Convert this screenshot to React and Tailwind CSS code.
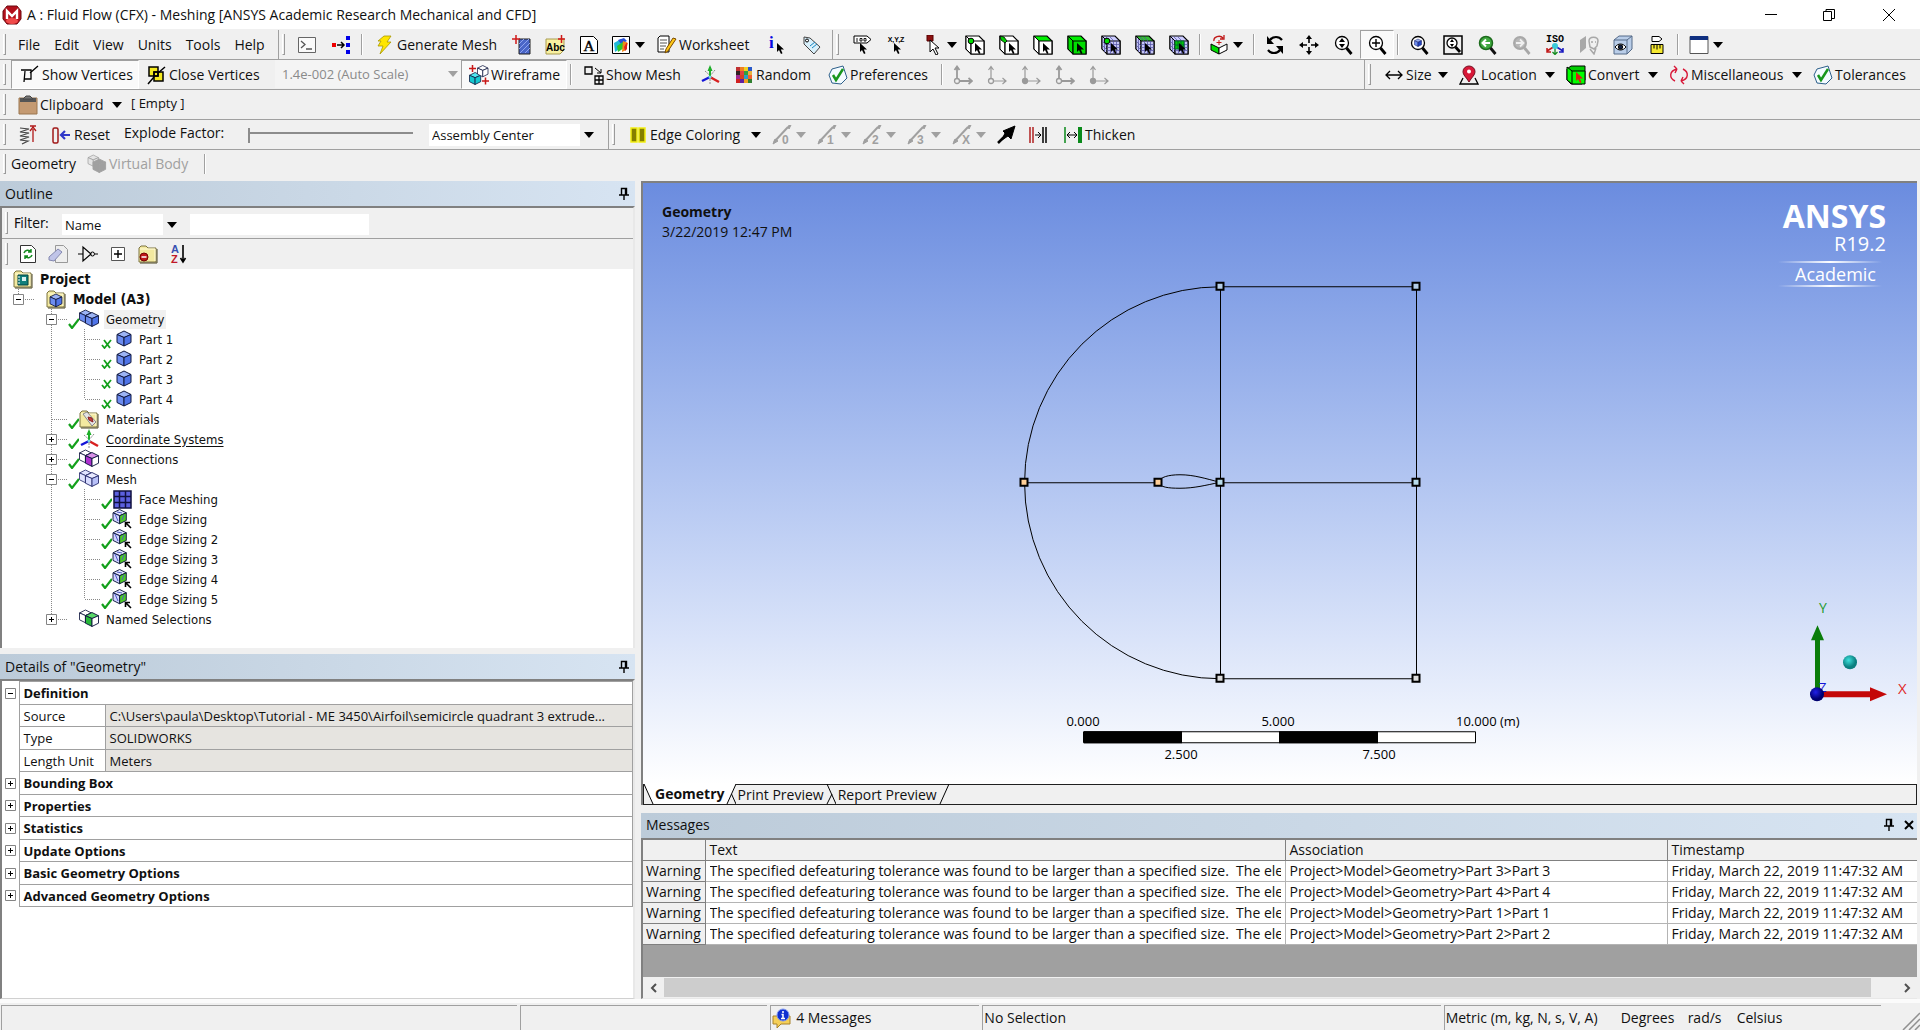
import clsx from "clsx";

/* ---------- icon primitives ---------- */

function Ico({ children, className }) {
  return (
    <svg viewBox="0 0 20 20" fill="none" stroke="#000" aria-hidden="true" className={clsx("h-5 w-5 shrink-0", className)}>
      {children}
    </svg>
  );
}

function Down({ gray }) {
  return (
    <svg viewBox="0 0 10 6" aria-hidden="true" className="h-[6px] w-[10px] shrink-0">
      <path d="M0 0h10L5 6z" fill={gray ? "#a0a0a0" : "#000"} />
    </svg>
  );
}

function Cursor({ x, y, fill = "#000" }) {
  return <path transform={`translate(${x} ${y})`} d="M0 0v9l2-2 2 4 1.500-.8-1.700-3.700H7z" fill={fill} stroke="none" />;
}

function SelectBox({ front = "#fff", top = "#fff", dot, corner, grid, patch }) {
  return (
    <Ico>
      <path d="M1 1h13l5 5v13H6l-5-5z" fill={top} strokeWidth="1.200" />
      <path d="M1 1l5 5v13l-5-5z" fill={grid ? "#c4c4f6" : front} />
      <path d="M6 6h13v13H6z" fill={grid ? "#c4c4f6" : front} strokeWidth="1.200" />
      {grid && <path d="M9.500 6v13M12.500 6v13M15.500 6v13M6 9.500h13M6 12.500h13M6 15.500h13M5 2l4 4M9 2l4 4M3.500 4v13M1 6l5 5M1 10l5 5" stroke="#5050a0" strokeWidth=".7" />}
      {patch && <path d="M6 6h9v8H6z" fill="#0c0" stroke="#063" />}
      {patch && <path d="M9 6v8M12 6v8M6 10h9" stroke="#063" />}
      {corner && <path d="M1 1l4 1 3 4-2 2-4-3z" fill="#0c0" strokeWidth=".8" />}
      {dot && <circle cx="6" cy="6" r="2.800" fill="#0d0" />}
      <Cursor x={10} y={8} />
    </Ico>
  );
}

function Lens({ children, color = "#000", fill = "#fff", box }) {
  return (
    <Ico>
      {box && <path d="M1 1h18v18H1z" strokeWidth="1.500" />}
      <circle cx="9" cy="8" r={box ? 5 : 6.500} fill={fill} stroke={color} strokeWidth="1.300" />
      <path d={box ? "M12.500 12l4.500 5" : "M13.500 13l5 6"} stroke={color} strokeWidth="2.800" />
      {children}
    </Ico>
  );
}

function Hex({ x = 0, y = 0, s = 1, fill = "#4f74e8", top = "#9db4f5", side = "#6d8df0", stroke = "#101840" }) {
  return (
    <g transform={`translate(${x} ${y}) scale(${s})`} stroke={stroke} strokeLinejoin="round">
      <path d="M0 3.500L7 0l7 3.500-7 3z" fill={top} />
      <path d="M0 3.500l7 3V15l-7-3.500z" fill={side} />
      <path d="M14 3.500l-7 3V15l7-3.500z" fill={fill} />
    </g>
  );
}

function Folder({ children }) {
  return (
    <Ico>
      <path d="M1 4l2-2h5l2 2h8v14H1z" fill="#f3e9a0" stroke="#7d7440" />
      <path d="M2 5h15v12" stroke="#fffbd8" />
      <path d="M19 5v14H2" stroke="#4a4420" />
      {children}
    </Ico>
  );
}

function TickCard() {
  return (
    <Ico>
      <path d="M4 4l11-3 4 12-6 6-9-1-3-8z" fill="#f4fbff" stroke="#2d5f8a" />
      <path d="M5 10l3 5 7-11" stroke="#18961c" strokeWidth="2.500" />
    </Ico>
  );
}

function Triad() {
  return (
    <Ico>
      <path d="M5 6l10 9M15 5l-5 6M10 11v8" stroke="#8a8a8a" strokeDasharray="2 1" />
      <path d="M10 12V2" stroke="#1fae2a" strokeWidth="2" />
      <path d="M7.500 6L10 0l2.500 6z" fill="#1fae2a" stroke="none" />
      <path d="M10 12l-8 4" stroke="#1414d8" strokeWidth="2.500" />
      <path d="M10 12l9 5" stroke="#d82020" strokeWidth="2.500" />
      <circle cx="10" cy="12" r="1.500" fill="#6fd6e8" stroke="none" />
    </Ico>
  );
}

function GrayAxes({ filled, bold }) {
  return (
    <Ico>
      <path d="M4 13V2M1.500 5L4 1.500 6.500 5M7 16h12M15.500 13l3.500 3-3.500 3" stroke="#9a9a9a" strokeWidth={bold ? 1.800 : 1.200} />
      <circle cx="4" cy="16" r="2.500" stroke="#9a9a9a" strokeWidth="1.300" fill={filled ? "#9a9a9a" : "#f0f0f0"} />
    </Ico>
  );
}

function EdgeCount({ n }) {
  return (
    <Ico>
      <path d="M2 17L16 2" stroke="#a0a0a0" strokeWidth="2" />
      <path d="M16 1l3-1-2 4zM1 19l2-5 3 2z" fill="#a0a0a0" stroke="#a0a0a0" />
      <text x="10" y="19" fontSize="12" fontWeight="bold" fill="#a0a0a0" stroke="none" fontFamily="Liberation Sans">{n}</text>
    </Ico>
  );
}

function Pin() {
  return (
    <svg viewBox="0 0 10 14" fill="none" stroke="#000" aria-hidden="true" className="h-[14px] w-[10px]">
      <path d="M2.500 7.500v-6h5v6M0 8h10M5 8v5M6.500 1.500v6" strokeWidth="1.400" />
    </svg>
  );
}

/* ---------- toolbar pieces ---------- */

function Grip() {
  return <span className="my-1 mr-[5px] ml-[3px] w-[3px] shrink-0 border-r border-b border-l border-[#9a9a9a] border-l-white" />;
}

function Sep() {
  return <span className="mx-[3px] my-1 w-[2px] shrink-0 border-r border-l border-r-white border-l-[#a0a0a0]" />;
}

function IconButton({ label, pressed, className = "w-[34px]", children }) {
  return (
    <button
      type="button"
      aria-label={label}
      aria-pressed={pressed}
      className={clsx(
        "flex shrink-0 items-center justify-center",
        pressed && "border border-[#a0a0a0] border-r-white border-b-white bg-[#f9f9f9]",
        className
      )}
    >
      {children}
    </button>
  );
}

function DropButton({ label, gray, className, children }) {
  return (
    <button type="button" aria-label={label} className={clsx("flex shrink-0 items-center gap-1", className)}>
      {children}
      <Down gray={gray} />
    </button>
  );
}

function TextButton({ icon, label, drop, pressed, disabled, className }) {
  return (
    <button
      type="button"
      disabled={disabled}
      aria-pressed={pressed}
      className={clsx(
        "flex shrink-0 items-center gap-[2px] whitespace-nowrap",
        pressed && "border border-[#a0a0a0] border-r-white border-b-white bg-[#f9f9f9]",
        disabled && "text-[#a0a0a0]",
        className
      )}
    >
      {icon}
      {label}
      {drop && <span className="mr-[3px] ml-auto"><Down /></span>}
    </button>
  );
}

function Combo({ label, value, disabled, className }) {
  return (
    <span className={clsx("relative flex shrink-0 items-center", className)}>
      <select
        aria-label={label}
        disabled={disabled}
        defaultValue={value}
        className={clsx("h-full w-full appearance-none text-[13px]", disabled ? "bg-[#f4f4f4] pl-[7px] text-[#8a8a8a]" : "bg-white pl-[3px]")}
      >
        <option>{value}</option>
      </select>
      <span className={clsx("pointer-events-none absolute right-0 flex h-full w-[17px] items-center justify-center", !disabled && "bg-[#f0f0f0]")}>
        <Down gray={disabled} />
      </span>
    </span>
  );
}

function ToolRow({ className, children }) {
  return <div className={clsx("flex items-stretch border-b border-[#a0a0a0]", className)}>{children}</div>;
}

/* ---------- toolbars ---------- */

function TitleBar() {
  return (
    <header className="flex h-[29px] items-center bg-white pl-[2px]">
      <svg viewBox="0 0 20 20" aria-hidden="true" className="h-5 w-5">
        <path d="M5 1h10l4 5v8l-4 5H5l-4-5V6z" fill="#b3101c" stroke="#6d0a10" />
        <ellipse cx="10" cy="16" rx="6" ry="3" fill="#f04a4a" />
        <path d="M5 14V6l5 5 5-5v8" fill="none" stroke="#fff" strokeWidth="2.400" />
      </svg>
      <h1 className="ml-[5px] text-[14px]">A : Fluid Flow (CFX) - Meshing [ANSYS Academic Research Mechanical and CFD]</h1>
      <div className="ml-auto flex h-full">
        <button type="button" aria-label="Minimize" className="flex w-[58px] items-center justify-center">
          <svg viewBox="0 0 12 12" className="h-3 w-3"><path d="M0 5.500h12" stroke="#000" /></svg>
        </button>
        <button type="button" aria-label="Restore" className="flex w-[58px] items-center justify-center">
          <svg viewBox="0 0 12 12" fill="none" stroke="#000" className="h-3 w-3"><path d="M.5 2.500h8v9h-8zM3 2.500v-2h8.500v9H9" /></svg>
        </button>
        <button type="button" aria-label="Close" className="flex w-[62px] items-center justify-center">
          <svg viewBox="0 0 12 12" stroke="#000" className="h-3 w-3"><path d="M0 0l12 12M12 0L0 12" /></svg>
        </button>
      </div>
    </header>
  );
}

const menus = ["File", "Edit", "View", "Units", "Tools", "Help"];

function MainToolbar() {
  return (
    <ToolRow className="h-[31px] pt-px">
      <div className="flex w-[279px] shrink-0 border-r border-[#a0a0a0]">
        <Grip />
        <nav className="flex">
          {menus.map((m) => (
            <button key={m} type="button" className="px-[7px]">{m}</button>
          ))}
        </nav>
      </div>
      <div className="flex shrink-0 border-r border-[#a0a0a0] pr-1">
        <Grip />
        <IconButton label="Command window">
          <Ico>
            <path d="M1.500 2.500h17v15h-17z" fill="#fafafa" stroke="#666" />
            <path d="M4 6l4 3.500L4 13M9 14h6" stroke="#555" strokeWidth="1.300" />
          </Ico>
        </IconButton>
        <IconButton label="Connections">
          <Ico>
            <path d="M1 8h4v4H1z" fill="#e00" stroke="none" />
            <path d="M6 10h6M10 7l3 3-3 3" strokeWidth="1.500" />
            <path d="M15 1h4v4h-4zM15 8h4v4h-4zM15 15h4v4h-4z" fill="#0000e8" stroke="none" />
          </Ico>
        </IconButton>
        <Sep />
        <TextButton
          className="w-[138px] pl-[9px]"
          label="Generate Mesh"
          icon={
            <Ico>
              <path d="M9 1h7l-4 6h4L5 19l3-8H3l3-5H3z" fill="#ffe600" stroke="#a89800" strokeWidth=".8" />
            </Ico>
          }
        />
        <IconButton label="Section plane">
          <Ico>
            <path d="M8 4h11v15H8z" fill="#4a66c8" stroke="#222" />
            <path d="M8 9l5-5M8 14L18 4M9 18L19 8M14 18l5-5" stroke="#8fa4f0" />
            <path d="M1 4h8M5 0v9" stroke="#d01818" strokeWidth="1.500" />
          </Ico>
        </IconButton>
        <IconButton label="Annotation">
          <Ico>
            <path d="M1 4h18v11l-4 4H1z" fill="#f8f0a0" stroke="#a89c50" />
            <text x="1" y="16" fontSize="10" fontWeight="bold" fill="#000" stroke="none" fontFamily="Liberation Sans">Abc</text>
            <path d="M13 4h7M16.500 0v8" stroke="#d01818" strokeWidth="1.500" />
          </Ico>
        </IconButton>
        <IconButton label="Text note">
          <Ico>
            <path d="M1.500 1.500h13l4 4v13h-17z" fill="#fff" />
            <text x="4.500" y="15.500" fontSize="15" fill="#000" stroke="#000" strokeWidth=".4" fontFamily="Liberation Serif">A</text>
          </Ico>
        </IconButton>
        <DropButton label="New figure" className="w-10 pl-[5px]">
          <Ico>
            <path d="M1.500 1.500h17v17h-17z" fill="#fff" />
            <path d="M3 8l7-4v9l-6 4z" fill="#1fb8d8" stroke="none" />
            <path d="M7 5l6-2 3 3-6 3z" fill="#2850d8" stroke="none" />
            <path d="M6 11l6-4 1 6-6 4z" fill="#2cc82c" stroke="none" />
            <path d="M12 6l5 2-2 7-4 2z" fill="#f08818" stroke="none" />
            <path d="M13 12l3-5v7l-2 2z" fill="#e02020" stroke="none" />
          </Ico>
        </DropButton>
        <TextButton
          className="w-[114px] pl-[11px]"
          label="Worksheet"
          icon={
            <Ico>
              <path d="M3 1h9v16H1V3z" fill="#fff" />
              <path d="M3 5h7M3 8h7M3 11h6M3 14h4" stroke="#555" />
              <path d="M19 4l-8 12-3 2 1-4 7-11z" fill="#ffc818" stroke="#7a4a00" />
            </Ico>
          }
        />
        <IconButton label="Selection information">
          <Ico>
            <text x="2" y="13" fontSize="17" fontWeight="bold" fill="#0808e0" stroke="none" fontFamily="Liberation Serif">i</text>
            <Cursor x={10} y={8} />
          </Ico>
        </IconButton>
        <IconButton label="Tags">
          <Ico>
            <path d="M3 2l6 1 10 9-6 7L3 9z" fill="#d9f0fb" stroke="#444" />
            <circle cx="6" cy="5.500" r="1.500" fill="#fff" />
            <path d="M9 11l5-4M11 13l5-4" stroke="#1785c0" />
          </Ico>
        </IconButton>
      </div>
      <Grip />
      <span className="w-px" />
      <IconButton label="Label selection">
        <Ico>
          <path d="M2 1h13l4 3.500L15 8H2z" fill="#fff" />
          <path d="M5 3v4M8 3.500h2v2.500H8zM12 3.500h2v2.500h-2z" strokeWidth=".9" />
          <Cursor x={8} y={8} />
        </Ico>
      </IconButton>
      <IconButton label="Coordinates">
        <Ico>
          <text x="10" y="7" textAnchor="middle" fontSize="7" fontWeight="bold" fill="#000" stroke="none" fontFamily="Liberation Sans">X,Y,Z</text>
          <Cursor x={8} y={8} />
        </Ico>
      </IconButton>
      <DropButton label="Select mode" className="ml-[5px] w-10 pl-[5px]">
        <Ico>
          <path d="M4 0h6v6H4z" fill="#8c1010" stroke="#500" />
          <path d="M7 5v12l3-3 3 6 2-1-3-6h4z" fill="#fff" />
        </Ico>
      </DropButton>
      <IconButton label="Vertex"><SelectBox dot /></IconButton>
      <IconButton label="Edge"><SelectBox corner /></IconButton>
      <IconButton label="Face"><SelectBox top="#0e0" /></IconButton>
      <IconButton label="Body"><SelectBox top="#0e0" front="#0d0" /></IconButton>
      <IconButton label="Node"><SelectBox grid dot top="#ccf" /></IconButton>
      <IconButton label="Element face"><SelectBox grid top="#3b3" /></IconButton>
      <IconButton label="Element"><SelectBox grid patch top="#ccf" /></IconButton>
      <Sep />
      <DropButton label="Extend" className="w-10 pl-[5px]">
        <Ico>
          <path d="M2 9l8 4v6l-8-4z" fill="#0d0" />
          <path d="M18 9l-8 4v6l8-4z" fill="#fff" />
          <path d="M5 6a5 4 0 0 1 9-3M15 0v4h-4" stroke="#c01818" strokeWidth="1.300" />
          <path d="M10 5v5M7.500 7.500h5" stroke="#c01818" />
        </Ico>
      </DropButton>
      <span className="w-[6px]" />
      <Sep />
      <IconButton label="Rotate">
        <Ico>
          <path d="M5 5c3-4 9-4 12 0M15 15c-3 4-9 4-12 0" strokeWidth="2.200" />
          <path d="M2 1v8h7zM18 19v-8h-7z" fill="#000" stroke="none" />
        </Ico>
      </IconButton>
      <IconButton label="Pan">
        <Ico>
          <path d="M10 3v5M10 12v5M3 10h5M12 10h5" strokeWidth="1.600" />
          <path d="M10 0l3 4H7zM10 20l3-4H7zM0 10l4-3v6zM20 10l-4-3v6z" fill="#000" stroke="none" />
        </Ico>
      </IconButton>
      <IconButton label="Zoom">
        <Lens><path d="M9 3l3 4H6zM9 13l3-4H6z" fill="#000" stroke="none" /></Lens>
      </IconButton>
      <IconButton label="Box zoom" pressed><Lens><path d="M9 4v8M5 8h8" strokeWidth="1.400" /></Lens></IconButton>
      <Sep />
      <IconButton label="Zoom to fit"><Lens><Hex x={5.500} y={4} s={0.5} fill="#2244c0" stroke="#101860" /></Lens></IconButton>
      <IconButton label="Magnifier window"><Lens box><path d="M9 4l2 3H7zM9 12l2-3H7z" fill="#000" stroke="none" /></Lens></IconButton>
      <IconButton label="Previous view">
        <Ico>
          <circle cx="9" cy="8" r="6.500" fill="#3fa83f" stroke="#1c6a1c" strokeWidth="1.500" />
          <path d="M13.500 13l5 6" stroke="#111" strokeWidth="2.800" />
          <path d="M13 8H6M9 4.500L5.500 8 9 11.500" stroke="#fff" strokeWidth="2" />
        </Ico>
      </IconButton>
      <IconButton label="Next view">
        <Ico>
          <circle cx="9" cy="8" r="6" fill="#b8b8b8" stroke="#a8a8a8" strokeWidth="2" />
          <path d="M13.500 13l5 6" stroke="#a8a8a8" strokeWidth="2.800" />
          <path d="M5 8h7M9 4.500L12.500 8 9 11.500" stroke="#f0f0f0" strokeWidth="1.800" />
        </Ico>
      </IconButton>
      <IconButton label="Isometric view">
        <Ico>
          <text x="10" y="7" textAnchor="middle" fontSize="10" fontWeight="bold" fill="#000" stroke="none" fontFamily="Liberation Mono">ISO</text>
          <path d="M10 11v8M7.500 17l2.500 2.500 2.500-2.500" stroke="#138a1e" strokeWidth="1.300" />
          <path d="M10 11l-8 5M2 13v4h4" stroke="#c01818" strokeWidth="1.500" />
          <path d="M10 11l8 5M18 13v4h-4" stroke="#1818c0" strokeWidth="1.500" />
          <circle cx="10" cy="11" r="3" fill="#3cc8d8" stroke="none" />
        </Ico>
      </IconButton>
      <IconButton label="Look at">
        <Ico>
          <path d="M1 5l6-4v12l-6 5z" fill="#a8a8a8" stroke="none" />
          <path d="M10 6c0-5 9-5 9 0l-1 5-3 3-4-2zM11 14l4 5 2-6M12 7h2M16 7h1" stroke="#a8a8a8" strokeWidth="1.500" />
        </Ico>
      </IconButton>
      <IconButton label="Manage views">
        <Ico>
          <path d="M1 5l5-4h13v13l-5 5H1z" fill="#b9cde8" stroke="#556a88" />
          <path d="M1 5h13v14M14 5l5-4" stroke="#556a88" />
          <path d="M2 12c3-4 8-4 11 0-3 4-8 4-11 0z" fill="#fff" />
          <circle cx="7.500" cy="12" r="2.200" fill="#124" />
        </Ico>
      </IconButton>
      <IconButton label="Rescale annotation">
        <Ico>
          <path d="M5 1.500h7l3 2.500-3 2.500H5z" fill="#fff" />
          <path d="M4 9.500h12v9H4z" fill="#f5e830" />
          <path d="M7 9.500v4M10 9.500v5M13 9.500v4" />
        </Ico>
      </IconButton>
      <Sep />
      <DropButton label="Window layout" className="w-10 pl-[7px]">
        <Ico>
          <path d="M1 1.500h18v17H1z" fill="#fff" stroke="#555" />
          <path d="M1 1h18v4H1z" fill="#0f2f80" stroke="none" />
        </Ico>
      </DropButton>
    </ToolRow>
  );
}

const swatches = ["#c03030", "#f08020", "#f0d020", "#2858c8", "#302020", "#e04040", "#30a040", "#e8b040", "#a02890", "#d84020", "#28a0c8", "#f06030", "#d02020", "#6020a0", "#f0a020", "#308030"];

function VertexToolbar() {
  return (
    <ToolRow className="h-[30px]">
      <div className="flex grow border-r border-[#a0a0a0]">
        <Grip />
        <TextButton
          pressed
          className="w-[128px] pl-[8px]"
          label="Show Vertices"
          icon={
            <Ico>
              <path d="M1 5h10v9H4M4 17l1-11M10 8l8-7" strokeWidth="1.300" />
            </Ico>
          }
        />
        <TextButton
          className="w-[136px] pl-[8px]"
          label="Close Vertices"
          icon={
            <Ico>
              <path d="M2 2h9v9H2zM7 7h9v9H7z" fill="#f5ea20" strokeWidth="1.500" />
              <path d="M7 7h4v4H7zM11 8l7-6M1 19l6-7" strokeWidth="1.500" />
            </Ico>
          }
        />
        <Combo label="Vertex scale" value="1.4e-002 (Auto Scale)" disabled className="mb-px w-[186px]" />
        <TextButton
          pressed
          className="w-[106px] pl-[7px]"
          label="Wireframe"
          icon={
            <Ico>
              <Hex x={0.500} y={7.500} s={0.800} fill="#14c8d0" side="#14c8d0" top="#50e8f0" />
              <Hex x={8.500} y={0.500} s={0.750} fill="#fff" side="#fff" top="#fff" />
              <path d="M0 3.500h7M3.500 0v7M13 16h7M16.500 12.500v7" stroke="#c81818" strokeWidth="1.500" />
            </Ico>
          }
        />
        <Sep />
        <TextButton
          className="w-[118px] pl-[9px]"
          label="Show Mesh"
          icon={
            <Ico>
              <path d="M1 2h7v7H1zM11 11h8v8h-8zM15 11v8M11 15h8" strokeWidth="1.300" />
              <path d="M11 3l6 5M17 4v4h-4" />
            </Ico>
          }
        />
        <IconButton label="Coordinate systems"><Triad /></IconButton>
        <TextButton
          className="w-[94px] pl-[7px]"
          label="Random"
          icon={
            <Ico>
              {swatches.map((c, i) => (
                <rect key={c + i} x={2 + (i % 4) * 4} y={2 + Math.floor(i / 4) * 4} width="4" height="4" fill={c} stroke="none" />
              ))}
            </Ico>
          }
        />
        <TextButton className="w-[113px] pl-[7px]" label="Preferences" icon={<TickCard />} />
        <span className="w-[4px]" />
        <Sep />
        <IconButton label="Axes 1"><GrayAxes bold /></IconButton>
        <IconButton label="Axes 2"><GrayAxes /></IconButton>
        <IconButton label="Axes 3"><GrayAxes filled /></IconButton>
        <IconButton label="Axes 4"><GrayAxes bold /></IconButton>
        <IconButton label="Axes 5"><GrayAxes filled /></IconButton>
      </div>
      <div className="flex shrink-0 pr-[9px]">
        <Grip />
        <TextButton
          drop
          className="w-[75px] pl-[8px]"
          label="Size"
          icon={<Ico><path d="M2 10h16M6 6l-4 4 4 4M14 6l4 4-4 4" strokeWidth="1.300" /></Ico>}
        />
        <TextButton
          drop
          className="w-[107px] pl-[8px]"
          label="Location"
          icon={
            <Ico>
              <path d="M4 13l-3 6h18l-3-6" strokeWidth="1.300" />
              <path d="M10 17C7 12 4 10 4 6.500a6 5.500 0 0 1 12 0C16 10 13 12 10 17z" fill="#d81838" stroke="#701020" />
              <circle cx="10" cy="6.500" r="2" fill="#fff" stroke="none" />
            </Ico>
          }
        />
        <TextButton
          drop
          className="w-[103px] pl-[8px]"
          label="Convert"
          icon={
            <Ico>
              <path d="M1 4l4-3h14v14l-3 4H5l-4-4z" fill="#0c0" />
              <path d="M1 2l5 4h13v13H6l-5-4z" fill="#0f0" />
              <path d="M6 6v13" />
              <Cursor x={10} y={7} fill="#e01818" />
            </Ico>
          }
        />
        <TextButton
          drop
          className="w-[144px] pl-[8px]"
          label="Miscellaneous"
          icon={
            <Ico>
              <path d="M8 4c-8 2-8 9-2 12M12 16c8-2 8-9 2-12M8 4L5 1M8 4L6 8M12 16l3 3M12 16l2-4" stroke="#d81838" strokeWidth="1.400" />
            </Ico>
          }
        />
        <TextButton className="w-[106px] pl-[8px]" label="Tolerances" icon={<TickCard />} />
      </div>
    </ToolRow>
  );
}

function ClipboardBar() {
  return (
    <ToolRow className="h-[30px]">
      <Grip />
      <TextButton
        drop
        className="w-[114px] pl-[7px]"
        label="Clipboard"
        icon={
          <Ico>
            <path d="M1 3h18v16H1z" fill="#c49a72" stroke="#9a7650" />
            <path d="M2 3h16v4H2z" fill="#555" stroke="none" />
            <path d="M5 4l3-3h4l3 3z" fill="#777" stroke="#444" />
          </Ico>
        }
      />
      <span className="ml-[6px] self-center pb-1 text-[13px]">[ Empty ]</span>
    </ToolRow>
  );
}

function ExplodeBar() {
  return (
    <ToolRow className="h-[30px]">
      <div className="flex w-[609px] shrink-0 border-r border-[#a0a0a0]">
        <Grip />
        <IconButton label="Explode">
          <Ico>
            <path d="M2 3l9 1-9 3 9 1-9 3 9 1-9 3 8 1-6 3" stroke="#444" strokeWidth="1.200" />
            <path d="M15 17V4M12 6l3-4 3 4M12 1h6" stroke="#b01818" strokeWidth="1.300" />
          </Ico>
        </IconButton>
        <TextButton
          className="w-[75px] pl-[7px]"
          label="Reset"
          icon={
            <Ico>
              <rect x="1" y="3" width="5" height="15" rx="1.500" stroke="#a01818" strokeWidth="1.500" />
              <path d="M18 10h-8M13 6l-4 4 4 4" stroke="#3038c8" strokeWidth="2.200" />
            </Ico>
          }
        />
        <label htmlFor="explode" className="ml-1 w-[117px] self-center pb-1 text-[14px] whitespace-nowrap">Explode Factor:</label>
        <input
          id="explode"
          type="range"
          defaultValue="0"
          className="mb-1 ml-1 w-[168px] appearance-none bg-transparent [&::-webkit-slider-runnable-track]:h-[2px] [&::-webkit-slider-runnable-track]:bg-[#8c8c8c] [&::-webkit-slider-thumb]:-mt-1 [&::-webkit-slider-thumb]:h-[15px] [&::-webkit-slider-thumb]:w-[5px] [&::-webkit-slider-thumb]:appearance-none [&::-webkit-slider-thumb]:border-r-2 [&::-webkit-slider-thumb]:border-[#8c8c8c] [&::-webkit-slider-thumb]:bg-[#f0f0f0]"
        />
        <Combo label="Explode center" value="Assembly Center" className="mt-1 mb-[3px] ml-[16px] w-[168px]" />
      </div>
      <Grip />
      <TextButton
        drop
        className="w-[144px] pl-[8px]"
        label="Edge Coloring"
        icon={<Ico><path d="M3 3h6v14H3zM11 3h6v14h-6z" fill="#857f00" stroke="#f2ee10" strokeWidth="1.500" /></Ico>}
      />
      {["0", "1", "2", "3", "X"].map((n) => (
        <DropButton key={n} gray label={`Edges with ${n} connections`} className="w-[45px] pl-[8px]">
          <EdgeCount n={n} />
        </DropButton>
      ))}
      <IconButton label="Direction">
        <Ico>
          <path d="M2 18l8-8" strokeWidth="2.500" />
          <path d="M19 1l-4 13-3-3-6 4 3-7-2-2z" fill="#000" />
        </Ico>
      </IconButton>
      <IconButton label="Edge joins" className="w-[30px]">
        <Ico>
          <path d="M2 2v16M5 2v16" stroke="#b02020" strokeWidth="1.500" />
          <path d="M15 2v16M18 2v16" strokeWidth="1.500" />
          <path d="M7 10h6M10 7l3 3-3 3" />
        </Ico>
      </IconButton>
      <TextButton
        className="pl-[10px]"
        label="Thicken"
        icon={
          <Ico>
            <path d="M2 2v16" stroke="#0a8a1a" strokeWidth="1.500" />
            <path d="M5 10h8M7 7l-3 3 3 3M11 7l3 3-3 3" />
            <path d="M15 2h4v16h-4z" fill="#0a8a1a" stroke="none" />
          </Ico>
        }
      />
    </ToolRow>
  );
}

function GeometryBar() {
  return (
    <div className="flex h-[31px] items-stretch pb-[3px]">
      <Grip />
      <TextButton className="w-[76px]" label="Geometry" />
      <TextButton
        disabled
        className="w-[112px]"
        label="Virtual Body"
        icon={
          <Ico>
            <Hex x={1} y={1} s={0.750} fill="#e4e4e4" side="#e4e4e4" top="#e4e4e4" stroke="#a0a0a0" />
            <Hex x={6} y={5} s={0.900} fill="#a0a0a0" side="#a0a0a0" top="#a0a0a0" stroke="#a0a0a0" />
          </Ico>
        }
      />
      <span className="w-[2px]" />
      <Sep />
    </div>
  );
}

/* ---------- docked panels ---------- */

function PanelHeader({ title, closable }) {
  return (
    <div className="flex h-[25px] shrink-0 items-center bg-linear-to-r from-[#bccbd9] to-[#d7e4f2] pr-[6px] pl-[5px]">
      <h2 className="text-[14px]">{title}</h2>
      <button type="button" aria-label="Auto hide" className="ml-auto"><Pin /></button>
      {closable && (
        <button type="button" aria-label="Close panel" className="-mr-[3px] ml-[10px]">
          <svg viewBox="0 0 10 10" stroke="#000" strokeWidth="2" className="h-[10px] w-[10px]"><path d="M1 1l8 8M9 1L1 9" /></svg>
        </button>
      )}
    </div>
  );
}

const twoCubes = (a, b) => (
  <Ico>
    <Hex x={0.500} y={1} s={0.850} {...a} />
    <Hex x={6.500} y={3.500} s={0.930} {...b} />
  </Ico>
);

const icons = {
  project: (
    <Folder>
      <path d="M5 6h10v10H5z" fill="#12807c" stroke="#044" />
      <path d="M5 8h2M5 11h2M5 14h2" stroke="#fff" />
      <path d="M9 8h4v4H9z" fill="#d8f0f0" stroke="none" />
    </Folder>
  ),
  model: <Folder><Hex x={4} y={5} s={0.850} /></Folder>,
  geometry: twoCubes({}, {}),
  part: <Ico><Hex x={5} y={2} /></Ico>,
  materials: (
    <Folder>
      <path d="M4 5l4-2 9 10-4 4z" fill="#e4e4e4" stroke="#888" />
      <path d="M9 8l4 1 1 4-4-2z" fill="#c84040" stroke="#822" />
    </Folder>
  ),
  coords: <Triad />,
  connections: twoCubes({ fill: "#fff", side: "#fff", top: "#fff" }, { fill: "#fff", side: "#b030d0", top: "#d890e8" }),
  mesh: twoCubes({ fill: "#b8c0f8", side: "#e0e4ff", top: "#e0e4ff", stroke: "#2c3070" }, { fill: "#b8c0f8", side: "#d8dcff", top: "#e8eaff", stroke: "#2c3070" }),
  face: (
    <Ico>
      <path d="M2 2h17v17H2z" fill="#5c60e0" stroke="#101040" strokeWidth="1.500" />
      <path d="M7.500 2v17M13.500 2v17M2 7.500h17M2 13.500h17" stroke="#101040" strokeWidth="1.500" />
    </Ico>
  ),
  edge: (
    <Ico>
      <Hex x={1} y={0.500} s={0.950} fill="#4cc828" side="#d0d4ff" top="#e4e6ff" />
      <path d="M3 5l3 7M10 11l2-5M5 3l5 1" stroke="#5058c8" />
      <path d="M19 19l-5-5M13.500 18v-4.500H18" strokeWidth="1.600" />
    </Ico>
  ),
  named: twoCubes({ fill: "#fff", side: "#fff", top: "#fff" }, { fill: "#fff", side: "#28b838", top: "#58d868" }),
};

// guides: one entry per indent level, "b" blank, "l" line, "t" tee, "e" end
const tree = [
  { label: "Project", icon: "project", guides: "", bold: true },
  { label: "Model (A3)", icon: "model", guides: "e", box: "-", bold: true },
  { label: "Geometry", icon: "geometry", guides: "bt", box: "-", mark: "ok", selected: true },
  { label: "Part 1", icon: "part", guides: "blt", mark: "x" },
  { label: "Part 2", icon: "part", guides: "blt", mark: "x" },
  { label: "Part 3", icon: "part", guides: "blt", mark: "x" },
  { label: "Part 4", icon: "part", guides: "ble", mark: "x" },
  { label: "Materials", icon: "materials", guides: "bt", mark: "ok" },
  { label: "Coordinate Systems", icon: "coords", guides: "bt", box: "+", mark: "ok", underline: true },
  { label: "Connections", icon: "connections", guides: "bt", box: "+", mark: "ok" },
  { label: "Mesh", icon: "mesh", guides: "bt", box: "-", mark: "ok" },
  { label: "Face Meshing", icon: "face", guides: "blt", mark: "ok" },
  { label: "Edge Sizing", icon: "edge", guides: "blt", mark: "ok" },
  { label: "Edge Sizing 2", icon: "edge", guides: "blt", mark: "ok" },
  { label: "Edge Sizing 3", icon: "edge", guides: "blt", mark: "ok" },
  { label: "Edge Sizing 4", icon: "edge", guides: "blt", mark: "ok" },
  { label: "Edge Sizing 5", icon: "edge", guides: "ble", mark: "ok" },
  { label: "Named Selections", icon: "named", guides: "be", box: "+" },
];

function Guide({ kind, box }) {
  return (
    <svg viewBox="0 0 33 20" fill="none" aria-hidden="true" className="h-5 w-[33px] shrink-0">
      {(kind === "l" || kind === "t") && <path d="M16.500 0v20" stroke="#888" strokeDasharray="1 1" />}
      {kind === "e" && <path d="M16.500 0v10" stroke="#888" strokeDasharray="1 1" />}
      {(kind === "t" || kind === "e") && <path d="M17 10.500h17" stroke="#888" strokeDasharray="1 1" />}
      {box && <path d="M11.500 5.500h10v10h-10z" fill="#fff" stroke="#848484" />}
      {box && <path d="M14 10.500h5" stroke="#000" />}
      {box === "+" && <path d="M16.500 8v5" stroke="#000" />}
    </svg>
  );
}

function Mark({ kind }) {
  return (
    <svg viewBox="0 0 11 20" fill="none" stroke="#14a01c" aria-hidden="true" className="h-5 w-[11px] shrink-0">
      {kind === "ok" && <path d="M1 15l3 4 7-9" strokeWidth="2.200" />}
      {kind === "x" && <path d="M1 16l2.500 3L10 11M3 11l6 8" strokeWidth="1.800" />}
    </svg>
  );
}

function Outline() {
  return (
    <section className="flex flex-[468] flex-col">
      <PanelHeader title="Outline" />
      <div className="flex grow flex-col border-t-2 border-r-2 border-l-2 border-[#808080] border-r-[#e8e8e8] bg-white">
        <div className="flex h-[31px] border-b border-[#a0a0a0] bg-[#f0f0f0]">
          <Grip />
          <label htmlFor="filter-text" className="w-[49px] self-center pl-[1px] font-['DejaVu_Sans_Condensed','Open_Sans',sans-serif] text-[14px]">Filter:</label>
          <Combo label="Filter by" value="Name" className="mt-[6px] mb-[3px] w-[118px]" />
          <input id="filter-text" className="mt-[6px] mb-[3px] ml-[10px] w-[179px] bg-white px-1 text-[13px]" />
        </div>
        <div className="flex h-[30px] bg-[#f0f0f0]">
          <Grip />
          <IconButton label="Refresh tree" className="w-[30px]">
            <Ico>
              <path d="M2.500 1.500h11l4 4v13h-15z" fill="#fff" stroke="#333" />
              <path d="M6 9c1-3 5-4 7-1M13 5v3h-3M14 11c-1 3-5 4-7 1M7 15v-3h3" stroke="#138a1e" strokeWidth="1.500" />
            </Ico>
          </IconButton>
          <IconButton label="Clear filter" className="w-[30px]">
            <Ico>
              <path d="M7.500 1.500h8l4 4v13h-12z" fill="#eee" stroke="#999" />
              <path d="M1 13l9-8 4 3-8 9-5-1z" fill="#c0c4e8" stroke="#8488b0" />
            </Ico>
          </IconButton>
          <IconButton label="Go to" className="w-[30px]">
            <Ico>
              <path d="M0 10h5M5 3v14l8-7z" strokeWidth="1.200" />
              <circle cx="14.500" cy="10" r="2" />
              <path d="M17 10h3" />
            </Ico>
          </IconButton>
          <IconButton label="Expand all" className="w-[30px]">
            <Ico>
              <path d="M3.500 3.500h13v13h-13z" fill="#fff" stroke="#555" />
              <path d="M6 10h8M10 6v8" strokeWidth="1.400" />
            </Ico>
          </IconButton>
          <IconButton label="Hide folders" className="w-[30px]">
            <Folder>
              <circle cx="6" cy="13" r="4" fill="#c01818" stroke="#700" />
              <path d="M3.500 13h5" stroke="#fff" strokeWidth="1.500" />
            </Folder>
          </IconButton>
          <IconButton label="Sort" className="w-[32px]">
            <Ico>
              <text x="2" y="9" fontSize="11" fontWeight="bold" fill="#3850b0" stroke="none" fontFamily="Liberation Sans">A</text>
              <text x="2" y="19" fontSize="11" fontWeight="bold" fill="#c01828" stroke="none" fontFamily="Liberation Sans">Z</text>
              <path d="M14 1v16M11.500 14l2.500 4 2.500-4" strokeWidth="1.600" />
            </Ico>
          </IconButton>
        </div>
        <ul className="font-['DejaVu_Sans_Condensed','Open_Sans',sans-serif] text-[13px]">
          {tree.map((n) => (
            <li key={n.label} className="flex h-5 items-center">
              {[...n.guides].map((g, i) => (
                <Guide key={i} kind={g} box={i === n.guides.length - 1 ? n.box : undefined} />
              ))}
              <Mark kind={n.mark} />
              {icons[n.icon]}
              <span
                className={clsx(
                  "ml-[5px] px-[2px] leading-[19px]",
                  n.bold && "text-[14px] font-bold",
                  n.selected && "bg-[#f0f0f0]",
                  n.underline && "underline underline-offset-2"
                )}
              >
                {n.label}
              </span>
            </li>
          ))}
        </ul>
      </div>
    </section>
  );
}

const details = [
  { group: "Definition", open: true },
  { name: "Source", value: "C:\\Users\\paula\\Desktop\\Tutorial - ME 3450\\Airfoil\\semicircle quadrant 3 extrude..." },
  { name: "Type", value: "SOLIDWORKS" },
  { name: "Length Unit", value: "Meters" },
  { group: "Bounding Box" },
  { group: "Properties" },
  { group: "Statistics" },
  { group: "Update Options" },
  { group: "Basic Geometry Options" },
  { group: "Advanced Geometry Options" },
];

function Details() {
  return (
    <section className="flex flex-[345] flex-col">
      <PanelHeader title={'Details of "Geometry"'} />
      <div className="grow border-t-2 border-r-2 border-b border-l-2 border-[#808080] border-r-[#e8e8e8] border-b-[#d0d0d0] bg-white">
        <table className="w-full table-fixed border-collapse text-[13px]">
          <colgroup>
            <col className="w-[17px]" />
            <col className="w-[86px]" />
            <col />
          </colgroup>
          <tbody>
            {details.map((d) => (
              <tr key={d.group || d.name} className="odd:h-[23px] even:h-[22px]">
                <td className="p-0">
                  {d.group && (
                    <button type="button" aria-label={`Toggle ${d.group}`} className="ml-[3px] block">
                      <svg viewBox="0 0 11 11" className="h-[11px] w-[11px]">
                        <path d="M.5.5h10v10H.5z" fill="#fff" stroke="#848484" />
                        <path d={d.open ? "M3 5.500h5" : "M3 5.500h5M5.500 3v5"} stroke="#000" />
                      </svg>
                    </button>
                  )}
                </td>
                {d.group ? (
                  <th colSpan={2} scope="colgroup" className="border border-[#a0a0a0] px-1 py-0 text-left leading-5">{d.group}</th>
                ) : (
                  <>
                    <th scope="row" className="border border-[#a0a0a0] px-1 py-0 text-left leading-5 font-normal whitespace-nowrap">{d.name}</th>
                    <td className="truncate border border-[#a0a0a0] bg-[#e6e4e0] px-1 py-0 leading-5">{d.value}</td>
                  </>
                )}
              </tr>
            ))}
          </tbody>
        </table>
      </div>
    </section>
  );
}

/* ---------- graphics view ---------- */

const vertices = [
  [1220, 286, "#b4cde8"],
  [1416, 286, "#b4cde8"],
  [1024, 482, "#ffcf98"],
  [1158, 482, "#ffcf98"],
  [1220, 482, "#b8dcec"],
  [1416, 482, "#b8dcec"],
  [1220, 678, "#dcdcdc"],
  [1416, 678, "#dcdcdc"],
];

const ticks = [
  [1083, 726, "0.000"],
  [1278, 726, "5.000"],
  [1181, 759, "2.500"],
  [1379, 759, "7.500"],
];

function Scene() {
  return (
    <svg viewBox="643 184 1274 598" className="absolute inset-0 h-full w-full" fontFamily="Open Sans, sans-serif" fontSize="13" aria-label="Airfoil domain">
      <defs>
        <radialGradient id="ball" cx="40%" cy="35%">
          <stop offset="0" stopColor="#3ee0dc" />
          <stop offset="1" stopColor="#0a7f80" />
        </radialGradient>
        <radialGradient id="origin" cx="40%" cy="35%">
          <stop offset="0" stopColor="#2020e8" />
          <stop offset="1" stopColor="#000070" />
        </radialGradient>
      </defs>
      <g fill="none" stroke="#000">
        <path d="M1220.500 286.500h196v392h-196z" />
        <path d="M1024 482.500h133M1220 482.500h196" />
        <path d="M1220.500 286.500a196 196 0 0 0 0 392" />
        <path d="M1158 482c2-5 10-7.500 22-7.500 14 0 26 4 40 7.500-14 3-26 6-40 6-12 0-20-1-22-6" />
      </g>
      {vertices.map(([x, y, fill]) => (
        <rect key={`${x}-${y}`} x={x - 3.500} y={y - 3.500} width="7" height="7" fill={fill} stroke="#000" strokeWidth="2" />
      ))}
      <path d="M1083.500 731.500h392v11h-392z" fill="#fff" stroke="#000" />
      <path d="M1084 731h98v12h-98zM1279 731h99v12h-99z" />
      {ticks.map(([x, y, t]) => (
        <text key={t} x={x} y={y} textAnchor="middle">{t}</text>
      ))}
      <text x="1456" y="726">10.000 (m)</text>

      <path d="M1815 694v-54h-4l6.500-15 6.500 15h-4v54z" fill="#0a7d0a" />
      <path d="M1818 691h52v-4l17 7-17 7v-4h-52z" fill="#c40808" />
      <text x="1819" y="692" fontSize="13" fill="#1414d8">Z</text>
      <circle cx="1817" cy="694" r="7" fill="url(#origin)" />
      <circle cx="1850" cy="662" r="7" fill="url(#ball)" />
      <text x="1819" y="613" fontSize="14" fill="#1c9a2c">Y</text>
      <text x="1898" y="694" fontSize="15" fill="#e02828">X</text>
    </svg>
  );
}

// slanted edge between two view tabs
function Slash({ left, active, both }) {
  return (
    <svg viewBox="0 0 10 20" fill="none" stroke="#000" aria-hidden="true" className="-mt-px h-5 w-[10px] shrink-0">
      {left && <path d="M0 0l9 20h1V0z" fill="#fff" stroke="none" />}
      {left && <path d="M0 0l9 20" />}
      {active && <path d="M0 0h10L1 20H0z" fill="#fff" stroke="none" />}
      {active && <path d="M10 0L1 20M5.500 10L10 20" />}
      {both && <path d="M1 0l9 20M6 10L1 20" />}
      {!left && !active && !both && <path d="M10 0L1 20" />}
    </svg>
  );
}

function ViewTabs() {
  return (
    <div className="flex h-[21px] shrink-0 border border-[#202020] bg-[#f0f0f0]">
      <Slash left />
      <button type="button" className="-mt-px bg-white px-px font-bold">Geometry</button>
      <Slash active />
      <button type="button" className="px-[2px]">Print Preview</button>
      <Slash both />
      <button type="button" className="px-[2px]">Report Preview</button>
      <Slash />
    </div>
  );
}

function Viewport() {
  return (
    <section className="flex grow flex-col border-t-2 border-l-2 border-[#808080]">
      <div className="relative flex grow items-start justify-between bg-linear-to-b from-[#6b8cdf] to-white pt-[16px] pr-[31px] pl-[19px]">
        <Scene />
        <div className="relative leading-5">
          <p className="pt-[3px] font-bold">Geometry</p>
          <p>3/22/2019 12:47 PM</p>
        </div>
        <div className="relative flex flex-col items-end text-white">
          <span className="text-[32px] leading-[34px] font-bold">ANSYS</span>
          <span className="text-[20px] leading-[22px]">R19.2</span>
          <span className="mt-[6px] mr-[4px] h-[2px] w-[104px] bg-linear-to-r from-transparent via-white to-transparent" />
          <span className="mr-[10px] text-[18px] leading-[22px]">Academic</span>
          <span className="mr-[4px] h-[2px] w-[104px] bg-linear-to-r from-transparent via-white to-transparent" />
        </div>
      </div>
      <ViewTabs />
    </section>
  );
}

const warning = "The specified defeaturing tolerance was found to be larger than a specified size.  The element size";
const messages = ["Part 3", "Part 4", "Part 1", "Part 2"];

function Messages() {
  return (
    <section className="mt-[8px] shrink-0">
      <PanelHeader title="Messages" closable />
      <div className="border-t-2 border-b border-l-2 border-[#808080] border-b-[#e8e8e8] bg-[#a0a0a0]">
        <table className="w-full table-fixed border-collapse bg-white">
          <colgroup>
            <col className="w-[62px]" />
            <col />
            <col className="w-[382px]" />
            <col className="w-[250px]" />
          </colgroup>
          <thead>
            <tr className="h-[21px] bg-[#f0f0f0] text-left leading-5">
              <th className="border-r border-b border-[#808080] p-0" aria-label="Severity" />
              {["Text", "Association", "Timestamp"].map((h) => (
                <th key={h} className="border-r border-b border-[#808080] py-0 pl-1 font-normal last:border-r-0">{h}</th>
              ))}
            </tr>
          </thead>
          <tbody>
            {messages.map((m) => (
              <tr key={m} className="h-[21px] border-b border-[#b4b4b4] leading-5 whitespace-pre">
                <td className="border-r border-b border-[#808080] bg-[#f0f0f0] py-0 pr-1 pl-[3px]"><div className="overflow-hidden">Warning</div></td>
                <td className="border-r border-[#b4b4b4] py-0 pr-1 pl-1"><div className="overflow-hidden">{warning}</div></td>
                <td className="border-r border-[#b4b4b4] py-0 pl-1">{`Project>Model>Geometry>${m}>${m}`}</td>
                <td className="py-0 pl-1">Friday, March 22, 2019 11:47:32 AM</td>
              </tr>
            ))}
          </tbody>
        </table>
        <div className="h-[32px]" />
        <div className="flex h-[21px] items-center bg-[#f0f0f0]">
          <button type="button" aria-label="Scroll left" className="flex w-[21px] justify-center">
            <svg viewBox="0 0 8 10" fill="none" stroke="#505050" strokeWidth="2" className="h-[10px] w-2"><path d="M6 1L2 5l4 4" /></svg>
          </button>
          <span className="h-[19px] grow bg-[#cdcdcd]" />
          <button type="button" aria-label="Scroll right" className="ml-[25px] flex w-[21px] justify-center">
            <svg viewBox="0 0 8 10" fill="none" stroke="#505050" strokeWidth="2" className="h-[10px] w-2"><path d="M2 1l4 4-4 4" /></svg>
          </button>
        </div>
      </div>
    </section>
  );
}

function StatusBar() {
  const cell = "flex items-center border-t border-l border-[#a0a0a0] pl-px whitespace-nowrap";
  return (
    <footer className="flex h-[25px] gap-[3px] pl-px">
      <span className={clsx(cell, "flex-[516]")} />
      <span className={clsx(cell, "flex-[246]")} />
      <span className={clsx(cell, "flex-[208] gap-1")}>
        <Ico>
          <path d="M1 8h17v8H9l-4 4v-4H1z" fill="#f5cf58" stroke="#a8822a" />
          <circle cx="11" cy="7" r="6" fill="#1030d0" stroke="#8098f0" />
          <path d="M11 3v2M9.500 6.500H11v4M9 10.500h4" stroke="#fff" strokeWidth="1.500" />
        </Ico>
        4 Messages
      </span>
      <span className={clsx(cell, "flex-[458]")}>No Selection</span>
      <span className={clsx(cell, "flex-[437]")}>
        <span className="w-[175px]">Metric (m, kg, N, s, V, A)</span>
        <span className="w-[67px]">Degrees</span>
        <span className="w-[49px]">rad/s</span>
        <span>Celsius</span>
      </span>
      <span className="flex w-9 items-end justify-end">
        <svg viewBox="0 0 18 18" stroke="#909090" strokeWidth="1.500" className="h-[18px] w-[18px]"><path d="M1 18L18 1M7 18L18 7M13 18l5-5" /></svg>
      </span>
    </footer>
  );
}

export default function App() {
  return (
    <div className="flex min-h-screen flex-col bg-[#f0f0f0] font-['Open_Sans','Noto_Sans',sans-serif] text-[14px] leading-5 text-[#101010]">
      <TitleBar />
      <MainToolbar />
      <VertexToolbar />
      <ClipboardBar />
      <ExplodeBar />
      <GeometryBar />
      <main className="flex grow">
        <div className="flex w-[635px] shrink-0 flex-col gap-[6px]">
          <Outline />
          <Details />
        </div>
        <div className="ml-[6px] flex min-w-0 grow flex-col pr-[3px]">
          <Viewport />
          <Messages />
        </div>
      </main>
      <div className="mb-[2px] h-[4px] bg-[#fbfbfb]" />
      <StatusBar />
    </div>
  );
}
